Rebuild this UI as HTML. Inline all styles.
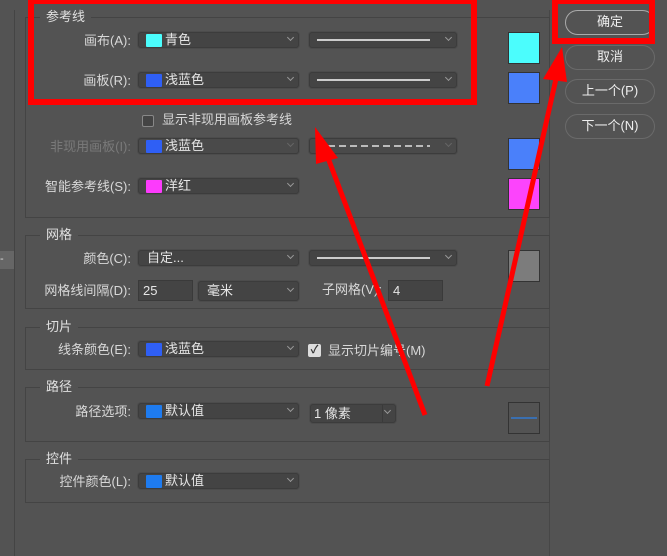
<!DOCTYPE html>
<html><head><meta charset="utf-8"><style>
*{margin:0;padding:0;box-sizing:border-box}
body{width:667px;height:556px;background:#535353;position:relative;overflow:hidden;font-family:"Liberation Sans","Noto Sans CJK SC",sans-serif;font-size:13px;color:#d8d8d8}
.a{position:absolute}
.grp{position:absolute;left:25px;width:525px;border:1px solid #444;border-left-color:#444}
.gt{position:absolute;background:#535353;padding:0 6px;left:14px;top:-10px;line-height:18px;color:#e0e0e0}
.lbl{position:absolute;text-align:right;width:125px;left:6px;line-height:16px;white-space:nowrap}
.dd{position:absolute;height:16px;background:#444;border:1px solid #3c3c3c;border-radius:3px;box-shadow:0 0 0 1px #4c4c4c}
.dd .sw{position:absolute;left:7px;top:1px;width:16px;height:13px;border-radius:1px}
.dd .t{position:absolute;left:26px;top:-1px;line-height:16px;color:#e6e6e6}
.dd .c{position:absolute;right:5px;top:2px;width:5px;height:5px;border-right:1px solid #999;border-bottom:1px solid #999;transform:rotate(45deg)}
.ln{position:absolute;left:7px;right:26px;top:6px;height:2px;background:#ccc}
.sq{position:absolute;left:508px;width:32px;height:32px;border:1px solid #333}
.btn{position:absolute;left:565px;width:90px;height:25px;border:1.5px solid #6a6a6a;border-radius:13px;text-align:center;line-height:22px;color:#eee}
.inp{position:absolute;height:21px;background:#444;border:1px solid #3a3a3a;line-height:19px;padding-left:4px;color:#e6e6e6}
.dis{color:#7a7a7a}
</style></head><body>
<div class="a" style="left:14px;top:10px;width:1px;height:546px;background:#444"></div>
<div class="a" style="left:0;top:251px;width:14px;height:18px;background:#666;color:#ddd;line-height:16px;font-size:11px">-</div>
<div class="a" style="left:549px;top:10px;width:1px;height:546px;background:#474747"></div>

<div class="grp" style="top:17px;height:201px"><div class="gt">参考线</div></div>
<div class="grp" style="top:235px;height:74px"><div class="gt">网格</div></div>
<div class="grp" style="top:327px;height:43px"><div class="gt">切片</div></div>
<div class="grp" style="top:387px;height:55px"><div class="gt">路径</div></div>
<div class="grp" style="top:459px;height:44px"><div class="gt">控件</div></div>

<div class="lbl" style="top:33px">画布(A):</div>
<div class="dd" style="left:138px;top:32px;width:161px"><div class="sw" style="background:#4bfdfd"></div><div class="t">青色</div><div class="c"></div></div>
<div class="dd" style="left:309px;top:32px;width:148px"><div class="ln"></div><div class="c"></div></div>
<div class="lbl" style="top:73px">画板(R):</div>
<div class="dd" style="left:138px;top:72px;width:161px"><div class="sw" style="background:#2f5ff5"></div><div class="t">浅蓝色</div><div class="c"></div></div>
<div class="dd" style="left:309px;top:72px;width:148px"><div class="ln"></div><div class="c"></div></div>
<div class="sq" style="top:32px;background:#4bfdfd"></div>
<div class="sq" style="top:72px;background:#4a80fa"></div>

<div class="a" style="left:142px;top:115px;width:12px;height:12px;border:1px solid #888;border-radius:2px;background:#444"></div>
<div class="a" style="left:162px;top:112px;line-height:16px">显示非现用画板参考线</div>

<div class="lbl dis" style="top:139px">非现用画板(I):</div>
<div class="dd" style="left:138px;top:138px;width:161px;background:#4a4a4a"><div class="sw" style="background:#2f5ff5"></div><div class="t dis">浅蓝色</div><div class="c" style="border-color:#666"></div></div>
<div class="dd" style="left:309px;top:138px;width:148px;background:#4a4a4a"><div class="ln" style="background:repeating-linear-gradient(90deg,#bbb 0 7px,transparent 7px 11px)"></div><div class="c" style="border-color:#666"></div></div>
<div class="sq" style="top:138px;background:#4a80fa"></div>

<div class="lbl" style="top:179px">智能参考线(S):</div>
<div class="dd" style="left:138px;top:178px;width:161px"><div class="sw" style="background:#fc3bfc"></div><div class="t">洋红</div><div class="c"></div></div>
<div class="sq" style="top:178px;background:#fc44fc"></div>

<div class="lbl" style="top:251px">颜色(C):</div>
<div class="dd" style="left:138px;top:250px;width:161px"><div class="t" style="left:8px">自定...</div><div class="c"></div></div>
<div class="dd" style="left:309px;top:250px;width:148px"><div class="ln"></div><div class="c"></div></div>
<div class="sq" style="top:250px;background:#7c7c7c"></div>
<div class="lbl" style="top:283px">网格线间隔(D):</div>
<div class="inp" style="left:138px;top:280px;width:55px">25</div>
<div class="dd" style="left:198px;top:281px;width:101px;height:20px"><div class="t" style="left:8px;top:1px">毫米</div><div class="c" style="top:4px"></div></div>
<div class="a" style="left:322px;top:282px;line-height:16px">子网格(V):</div>
<div class="inp" style="left:388px;top:280px;width:55px">4</div>

<div class="lbl" style="top:342px">线条颜色(E):</div>
<div class="dd" style="left:138px;top:341px;width:161px"><div class="sw" style="background:#2f5ff5"></div><div class="t">浅蓝色</div><div class="c"></div></div>
<div class="a" style="left:308px;top:344px;width:13px;height:13px;background:#ddd;border-radius:2px;color:#333;font-size:11px;line-height:13px;text-align:center;font-weight:bold">✓</div>
<div class="a" style="left:328px;top:343px;line-height:16px">显示切片编号(M)</div>

<div class="lbl" style="top:404px">路径选项:</div>
<div class="dd" style="left:138px;top:403px;width:161px"><div class="sw" style="background:#1e7bef"></div><div class="t">默认值</div><div class="c"></div></div>
<div class="dd" style="left:310px;top:404px;width:86px;height:19px"><div class="t" style="left:3px;top:1px">1 像素</div><div class="a" style="left:71px;top:0;width:1px;height:17px;background:#3a3a3a"></div><div class="c" style="top:3px"></div></div>
<div class="sq" style="top:402px;background:#535353"><div class="a" style="left:2px;right:2px;top:14px;height:2px;background:#3a6fb0"></div></div>

<div class="lbl" style="top:474px">控件颜色(L):</div>
<div class="dd" style="left:138px;top:473px;width:161px"><div class="sw" style="background:#1e7bef"></div><div class="t">默认值</div><div class="c"></div></div>

<div class="btn" style="top:10px;border-color:#aaa">确定</div>
<div class="btn" style="top:45px">取消</div>
<div class="btn" style="top:79px">上一个(P)</div>
<div class="btn" style="top:114px">下一个(N)</div>

<div class="a" style="left:28px;top:-2px;width:449px;height:107px;border:6px solid #f00"></div>
<div class="a" style="left:552px;top:-2px;width:103px;height:46px;border:6px solid #f00"></div>
<svg class="a" style="left:0;top:0" width="667" height="556">
<line x1="425" y1="415" x2="325" y2="150" stroke="#f00" stroke-width="5"/>
<polygon points="315,127 338,158 316,164" fill="#f00"/>
<line x1="487" y1="386" x2="558" y2="70" stroke="#f00" stroke-width="5"/>
<polygon points="562,47 567,82 543,79" fill="#f00"/>
</svg>
</body></html>
